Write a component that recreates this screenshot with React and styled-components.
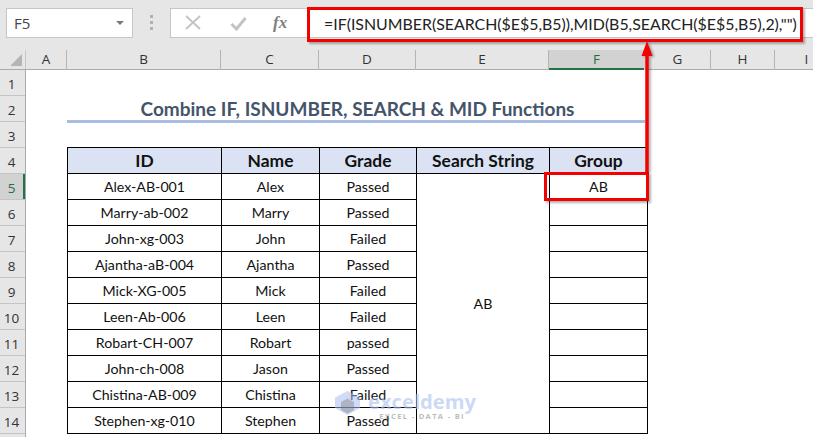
import React from 'react';
import styled, { createGlobalStyle } from 'styled-components';

const Global = createGlobalStyle`
  html, body { margin: 0; padding: 0; background: #fff; }
  body { width: 813px; height: 437px; overflow: hidden; font-family: "Lato", "Open Sans", sans-serif; }
`;
const Page = styled.div`position: relative; width: 813px; height: 437px; overflow: hidden; background: #fff;`;
const FormulaBar = styled.div`display: flex; align-items: flex-start; height: 50px; background: #e6e6e6; padding-top: 8px; padding-left: 6px; box-sizing: border-box;`;
const NameBox = styled.div`display: flex; align-items: center; justify-content: space-between; width: 127px; height: 30px; box-sizing: border-box; background: #fff; border: 1px solid #c6c6c6; padding: 0 8px 0 7px; font: 15px "Open Sans", sans-serif; color: #444;`;
const Caret = styled.span`width: 0; height: 0; border-left: 4px solid transparent; border-right: 4px solid transparent; border-top: 4px solid #7a7a7a;`;
const Grip = styled.div`display: grid; gap: 3px; width: 37px; justify-items: center; padding-top: 7px;`;
const GripDot = styled.span`width: 3px; height: 3px; background: #b1b1b1;`;
const FormulaBox = styled.div`display: flex; align-items: center; flex: 1; height: 30px; box-sizing: border-box; background: #fff; border: 1px solid #c6c6c6; border-right: none;`;
const FxButtons = styled.div`display: flex; align-items: center; width: 137px; flex: none; padding-left: 14px; gap: 29px; box-sizing: border-box;`;
const FxGlyph = styled.span`font: italic 700 17px "Liberation Serif", serif; color: #7f7f7f; margin-left: -3px;`;
const FormulaText = styled.div`font: 400 15.9px "Lato", sans-serif; color: #222; white-space: nowrap; margin-left: 16px;`;
const ColHeaders = styled.div`display: flex; height: 20px; background: #e6e6e6; border-bottom: 1px solid #ababab; box-sizing: border-box;`;
const Corner = styled.div`width: 26px; flex: none; display: flex; align-items: flex-end; justify-content: flex-end; padding: 0 3px 3px 0; box-sizing: border-box; border-right: 1px solid #c8c8c8;`;
const ColHead = styled.div`
  flex: none; width: ${p => p.$w}px; box-sizing: border-box; text-align: center;
  font: 400 13.5px/19px "Open Sans", sans-serif; color: ${p => p.$active ? '#1f6e43' : '#333'};
  background: ${p => p.$active ? '#d2d2d2' : 'transparent'};
  border-right: 1px solid ${p => p.$active ? '#d2d2d2' : '#b5b5b5'};
  box-shadow: ${p => p.$active ? 'inset 0 -2px 0 #217346' : 'none'};
  height: 20px;
`;
const Body = styled.div`display: flex; height: 367px;`;
const RowHeaders = styled.div`width: 26px; flex: none; background: #e6e6e6; border-right: 1px solid #ababab; box-sizing: border-box;`;
const RowHead = styled.div`
  height: 26px; box-sizing: border-box; text-align: center; padding-right: 2px;
  font: 400 13.5px/28px "Open Sans", sans-serif; color: ${p => p.$active ? '#1f6e43' : '#333'};
  border-bottom: 1px solid #c4c4c4;
  background: ${p => p.$active ? '#d2d2d2' : 'transparent'};
  box-shadow: ${p => p.$active ? 'inset -2px 0 0 #217346' : 'none'};
`;
const Sheet = styled.div`flex: 1; padding-left: 41px; box-sizing: border-box; overflow: hidden;`;
const TitleRow = styled.div`width: 578px; height: 53px; box-sizing: border-box; display: flex; justify-content: center; align-items: flex-end; border-bottom: 3px solid #a9bde0;`;
const Title = styled.div`font: 700 19px/26px "Lato", sans-serif; color: #44546a; white-space: nowrap; margin: 0 0 -2px 3px;`;
const Spacer = styled.div`height: 24px;`;
const DataTable = styled.table`border-collapse: collapse; table-layout: fixed; width: 580px;`;
const Th = styled.th`
  height: 26px; padding: 0; box-sizing: border-box; border: 1.5px solid #000; background: #dae2f3;
  font: 700 17.4px "Lato", sans-serif; color: #111; text-align: center;
`;
const Td = styled.td`
  height: 26px; padding: 0; box-sizing: border-box; border: 1.5px solid #000;
  font: 400 14.2px "Lato", sans-serif; color: #111; text-align: center; background: #fff;
`;
const RedBox = styled.div`position: absolute; box-sizing: border-box; border: 3px solid #f40000; box-shadow: 2px 2px 2px rgba(0,0,0,.3); left: ${p => p.$l}px; top: ${p => p.$t}px; width: ${p => p.$w}px; height: ${p => p.$h}px;`;
const Arrow = styled.svg`position: absolute; left: 637px; top: 36px; filter: drop-shadow(2px 1px 1px rgba(0,0,0,.3));`;
const Watermark = styled.div`position: absolute; left: 335px; top: 391px; display: flex; gap: 8px; pointer-events: none;`;
const WmText = styled.div`display: flex; flex-direction: column; align-items: center;`;
const WmName = styled.div`font: 700 20.2px/21px "Open Sans", sans-serif; color: rgba(170,192,240,.62);`;
const WmSub = styled.div`font: 700 7.6px/8px "Open Sans", sans-serif; color: rgba(120,120,120,.5); letter-spacing: 1.3px; margin-top: 0;`;

const cols = [['A',41],['B',154],['C',98],['D',97],['E',133],['F',96,true],['G',66],['H',64],['I',64]];
const rows = [
  ['Alex-AB-001','Alex','Passed'],['Marry-ab-002','Marry','Passed'],['John-xg-003','John','Failed'],
  ['Ajantha-aB-004','Ajantha','Passed'],['Mick-XG-005','Mick','Failed'],['Leen-Ab-006','Leen','Failed'],
  ['Robart-CH-007','Robart','passed'],['John-ch-008','Jason','Passed'],['Chistina-AB-009','Chistina','Failed'],
  ['Stephen-xg-010','Stephen','Passed'],
];

export default function App() {
  return (
    <Page>
      <Global />
      <FormulaBar>
        <NameBox>F5<Caret /></NameBox>
        <Grip><GripDot /><GripDot /><GripDot /></Grip>
        <FormulaBox>
          <FxButtons>
            <svg width="16" height="16" viewBox="0 0 16 16"><path d="M1 1l14 13M15 1L1 14" stroke="#c4c4c4" strokeWidth="2" fill="none" /></svg>
            <svg width="17" height="15" viewBox="0 0 17 15"><path d="M1.500 8l5 5 9-11" stroke="#c4c4c4" strokeWidth="3" fill="none" /></svg>
            <FxGlyph>fx</FxGlyph>
          </FxButtons>
          <FormulaText>=IF(ISNUMBER(SEARCH($E$5,B5)),MID(B5,SEARCH($E$5,B5),2),"")</FormulaText>
        </FormulaBox>
      </FormulaBar>
      <ColHeaders>
        <Corner><svg width="12" height="12" viewBox="0 0 12 12"><path d="M12 0v12H0z" fill="#b5b5b5" /></svg></Corner>
        {cols.map(([c, w, a]) => <ColHead key={c} $w={w} $active={a}>{c}</ColHead>)}
      </ColHeaders>
      <Body>
        <RowHeaders>
          {Array.from({ length: 15 }, (_, i) => <RowHead key={i} $active={i === 4}>{i + 1}</RowHead>)}
        </RowHeaders>
        <Sheet>
          <TitleRow><Title>Combine IF, ISNUMBER, SEARCH &amp; MID Functions</Title></TitleRow>
          <Spacer />
          <DataTable>
            <colgroup><col width="154" /><col width="98" /><col width="97" /><col width="133" /><col width="98" /></colgroup>
            <thead><tr><Th>ID</Th><Th>Name</Th><Th>Grade</Th><Th>Search String</Th><Th>Group</Th></tr></thead>
            <tbody>
              {rows.map((r, i) => (
                <tr key={r[0]}>
                  <Td>{r[0]}</Td><Td>{r[1]}</Td><Td>{r[2]}</Td>
                  {i === 0 && <Td rowSpan={10}>AB</Td>}
                  <Td>{i === 0 ? 'AB' : ''}</Td>
                </tr>
              ))}
            </tbody>
          </DataTable>
        </Sheet>
      </Body>
      <RedBox $l={307} $t={7} $w={496} $h={35} />
      <RedBox $l={544} $t={172} $w={105} $h={29} />
      <Arrow width="20" height="140" viewBox="0 0 20 140">
        <path d="M10 10V136" stroke="#f40000" strokeWidth="3.500" fill="none" />
        <path d="M10 5l5.500 15h-11z" fill="#f40000" />
      </Arrow>
      <Watermark>
        <svg width="25" height="24" viewBox="0 0 25 24">
          <path d="M12.500 0L25 6.500V17l-12.500 7L0 17V6.500z" fill="rgba(170,192,240,.55)" />
          <path d="M6 11l6.500-3.500L19 11v8l-6.500 3.500L6 19z" fill="rgba(120,120,120,.4)" />
        </svg>
        <WmText><WmName>exceldemy</WmName><WmSub>EXCEL - DATA - BI</WmSub></WmText>
      </Watermark>
    </Page>
  );
}
